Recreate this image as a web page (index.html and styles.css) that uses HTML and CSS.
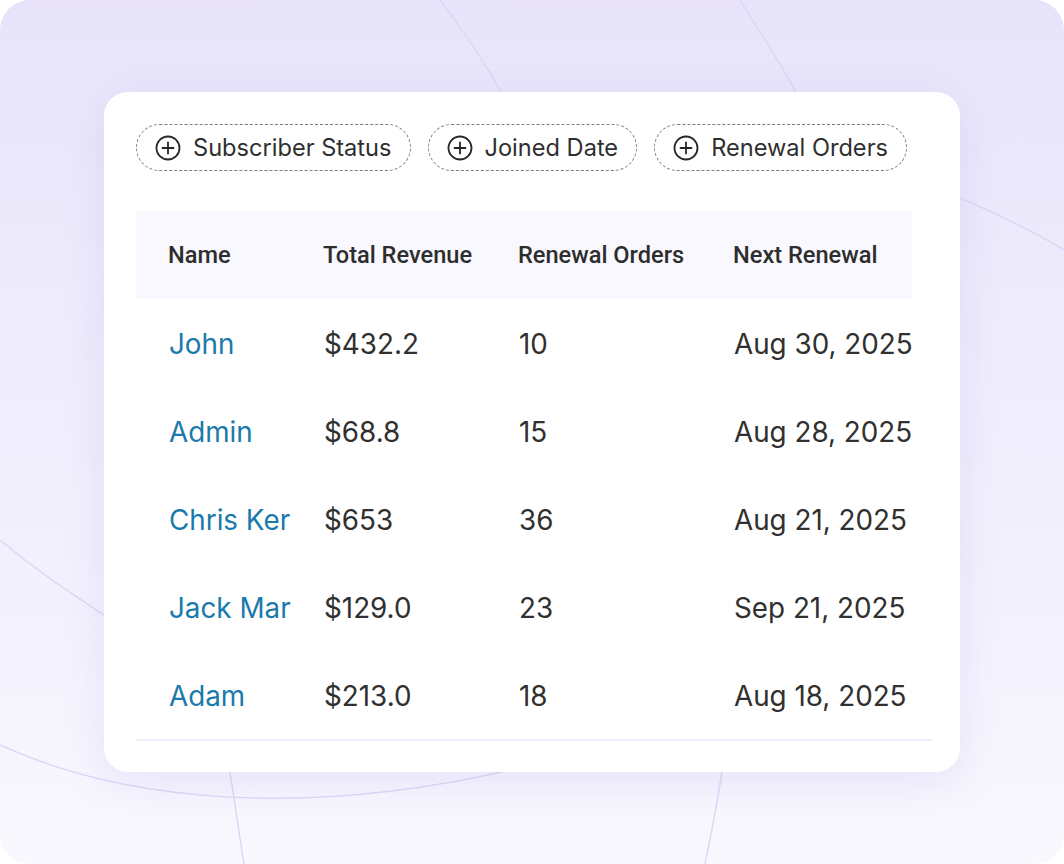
FILE: index.html
```html
<!DOCTYPE html>
<html lang="en">
<head>
<meta charset="utf-8">
<title>Subscribers</title>
<link rel="stylesheet" href="styles.css">
</head>
<body>
<div class="frame">
  <svg class="deco" width="1064" height="864" viewBox="0 0 1064 864" aria-hidden="true">
    <path d="M440 0 C 470 40, 490 70, 505 100" />
    <path d="M740 0 C 765 40, 785 70, 800 100" />
    <path d="M0 540 C 60 590, 100 610, 140 640" />
    <path d="M0 745 C 120 800, 300 820, 520 768" />
    <path d="M230 772 C 236 810, 240 840, 244 864" />
    <path d="M722 772 C 716 810, 710 840, 705 864" />
    <path d="M960 198 C 1000 215, 1040 235, 1064 250" />
  </svg>
  <main class="card">
    <div class="chips">
      <button class="chip"><svg class="plus" viewBox="0 0 26 26"><circle cx="13" cy="13" r="11.5"/><path d="M13 7.5v11M7.5 13h11"/></svg><span>Subscriber Status</span></button>
      <button class="chip"><svg class="plus" viewBox="0 0 26 26"><circle cx="13" cy="13" r="11.5"/><path d="M13 7.5v11M7.5 13h11"/></svg><span>Joined Date</span></button>
      <button class="chip"><svg class="plus" viewBox="0 0 26 26"><circle cx="13" cy="13" r="11.5"/><path d="M13 7.5v11M7.5 13h11"/></svg><span>Renewal Orders</span></button>
    </div>
    <div class="table">
      <div class="thead">
        <div class="th">Name</div>
        <div class="th">Total Revenue</div>
        <div class="th">Renewal Orders</div>
        <div class="th">Next Renewal</div>
      </div>
      <div class="tbody">
        <div class="tr"><a class="name">John</a><span>$432.2</span><span>10</span><span>Aug 30, 2025</span></div>
        <div class="tr"><a class="name">Admin</a><span>$68.8</span><span>15</span><span>Aug 28, 2025</span></div>
        <div class="tr"><a class="name">Chris Ker</a><span>$653</span><span>36</span><span>Aug 21, 2025</span></div>
        <div class="tr"><a class="name">Jack Mar</a><span>$129.0</span><span>23</span><span>Sep 21, 2025</span></div>
        <div class="tr"><a class="name">Adam</a><span>$213.0</span><span>18</span><span>Aug 18, 2025</span></div>
      </div>
    </div>
  </main>
</div>
</body>
</html>
```

FILE: styles.css
```css
* { box-sizing: border-box; }
html, body { margin: 0; padding: 0; background: #ffffff; }
body { width: 1064px; height: 864px; overflow: hidden; }

.frame {
  position: relative;
  width: 1064px;
  height: 864px;
  border-radius: 30px;
  overflow: hidden;
  background: linear-gradient(180deg, #e8e3fa 0%, #eeebfc 35%, #f3f1fd 70%, #f9f8fe 100%);
  padding: 92px 104px 0 104px;
}

.deco {
  position: absolute;
  left: 0;
  top: 0;
  fill: none;
  stroke: #ddd7f6;
  stroke-width: 1.5;
}

.card {
  position: relative;
  width: 856px;
  height: 680px;
  background: #ffffff;
  border-radius: 24px;
  box-shadow: 0 10px 40px rgba(160, 145, 230, 0.18);
  padding: 32px 28px 0 32px;
}

.chips {
  display: flex;
  gap: 17px;
}

.chip {
  display: flex;
  align-items: center;
  gap: 12px;
  height: 47px;
  padding: 0 18px 0 18px;
  border: 1.8px dashed #7c7c7c;
  border-radius: 24px;
  background: #fff;
  font-family: "Inter", "Liberation Sans", sans-serif;
  font-size: 23.6px;
  color: #2f2f2f;
}

.plus {
  width: 26px;
  height: 26px;
  fill: none;
  stroke: #262626;
  stroke-width: 1.8;
  stroke-linecap: round;
}

.table {
  margin-top: 40px;
  width: 796px;
}

.thead {
  display: grid;
  grid-template-columns: 155px 195px 215px 1fr;
  width: 776px;
  height: 88px;
  align-items: center;
  padding-left: 32px;
  background: #f8f8fe;
  font-family: "Roboto", "Liberation Sans", sans-serif;
  font-weight: 500;
  font-size: 23.6px;
  color: #2d2d2d;
  white-space: nowrap;
}

.tbody {
  border-bottom: 2px solid #efedfa;
}

.tr {
  display: grid;
  grid-template-columns: 155px 195px 215px 1fr;
  height: 88px;
  align-items: center;
  padding-left: 33px;
  padding-top: 2px;
  font-family: "Inter", "Liberation Sans", sans-serif;
  font-size: 27.8px;
  color: #303030;
  white-space: nowrap;
}

.name {
  color: #1a7aab;
  text-decoration: none;
}
```
